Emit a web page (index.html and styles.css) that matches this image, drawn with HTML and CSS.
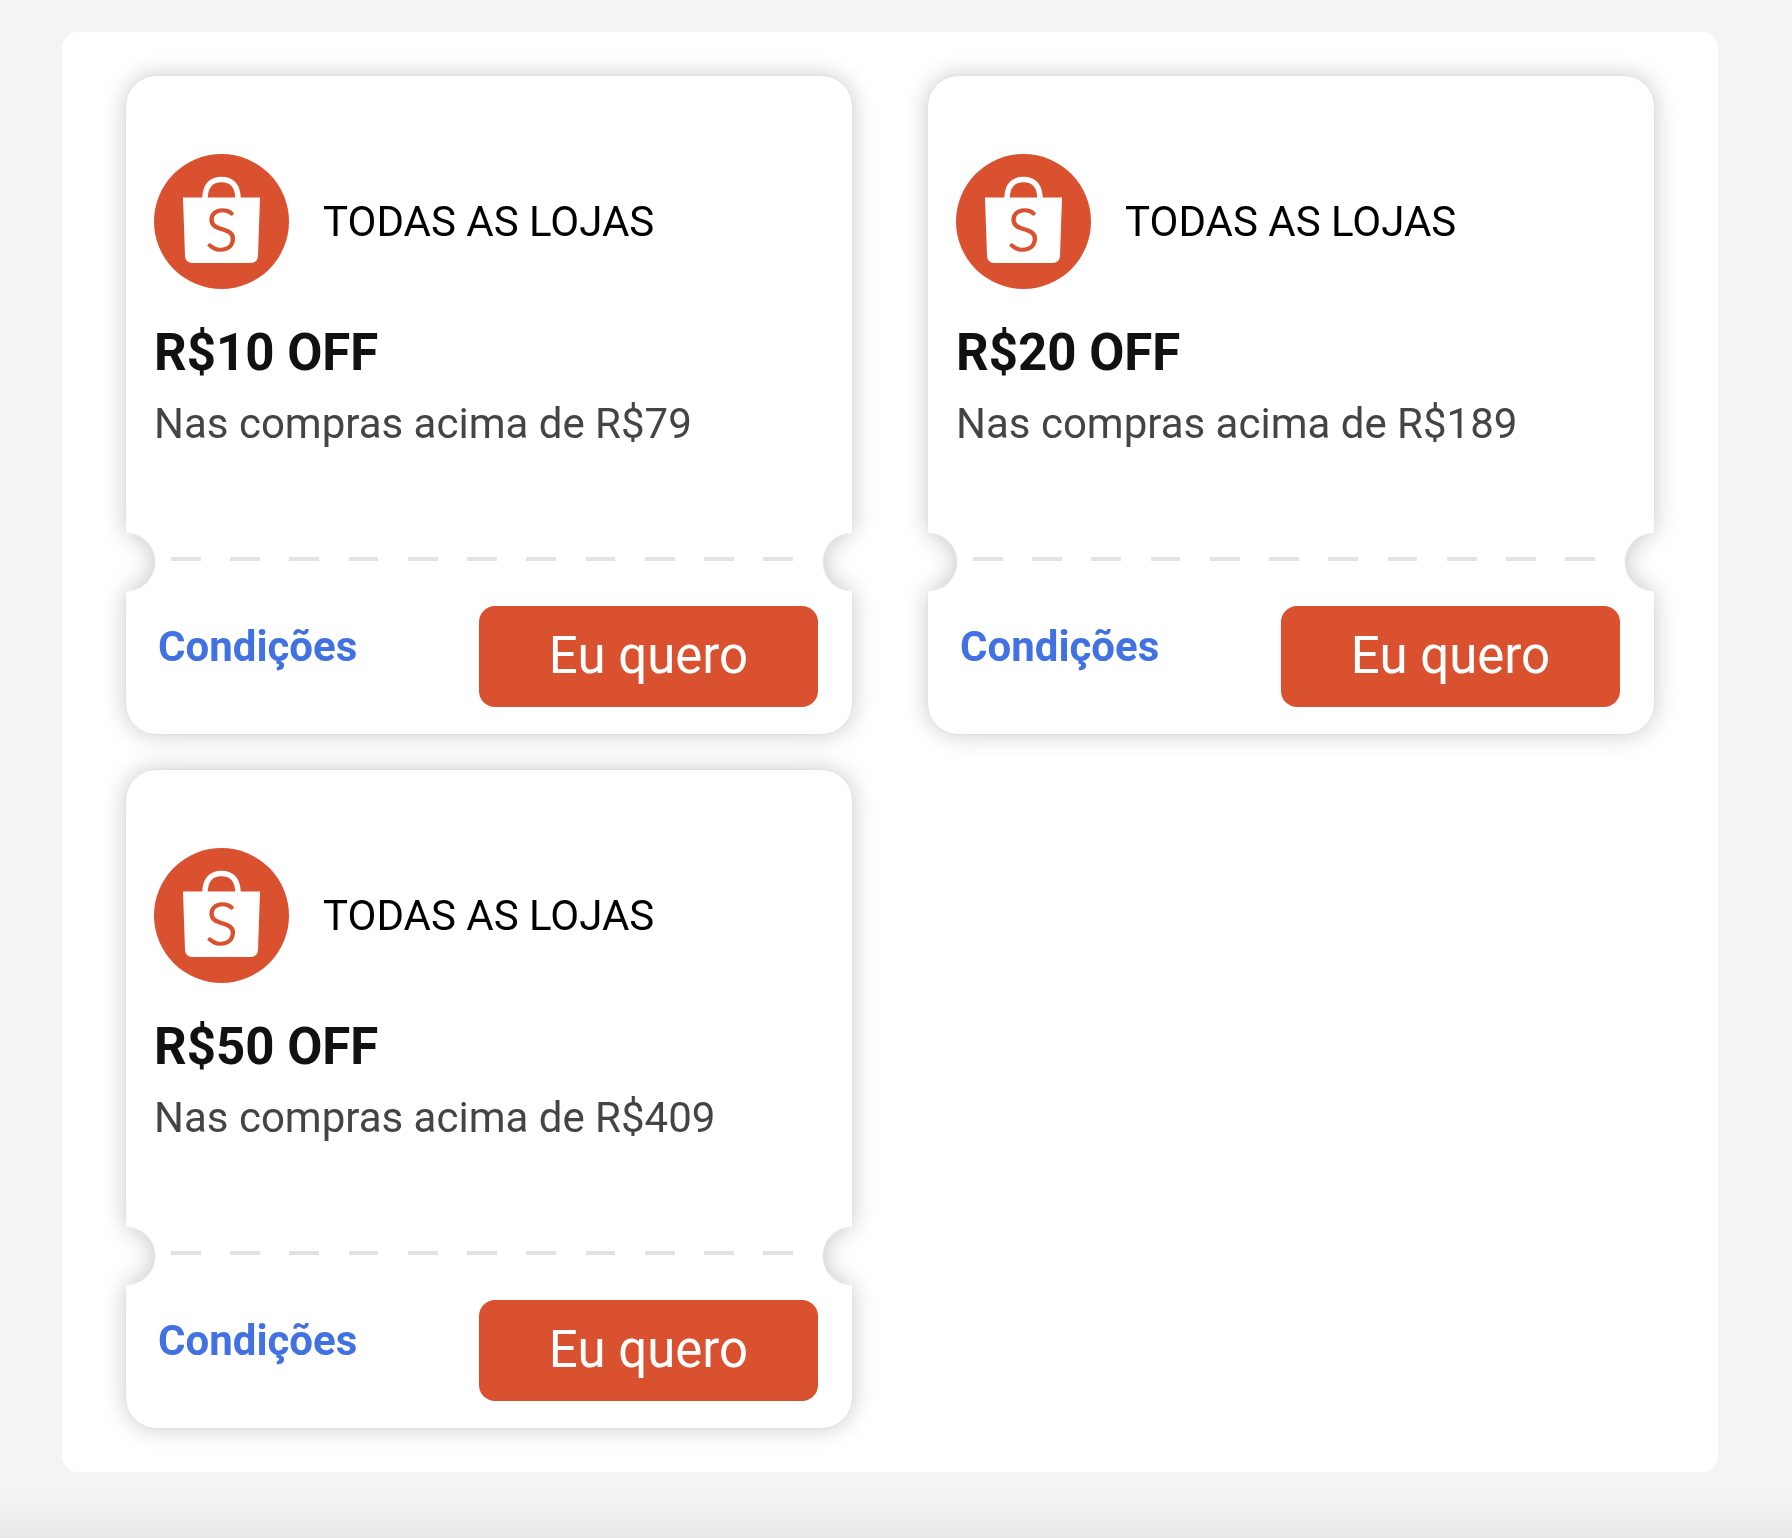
FILE: index.html
```html
<!DOCTYPE html>
<html lang="pt-BR">
<head>
    <meta charset="UTF-8">
    <meta name="viewport" content="width=device-width, initial-scale=1.0">
    <title>Cupons</title>
    <link rel="stylesheet" href="styles.css">
</head>
<body>
    <main class="panel">
        <div class="coupon">
            <div class="card">
                <div class="store">
                    <svg class="logo" viewBox="0 0 135 135" aria-hidden="true">
                        <circle cx="67.5" cy="67.5" r="67.5" fill="#da5130"/>
                        <path d="M51 45C51 32 57 25.5 67.5 25.5S84 32 84 45" fill="none" stroke="#fff" stroke-width="5.5"/>
                        <path d="M29 43.5H106L104 102Q103.500 109 96.500 109H38.500Q31.500 109 31 102Z" fill="#fff"/>
                        <text class="logo-letter" x="67.5" y="97" text-anchor="middle">S</text>
                    </svg>
                    <span class="store-name">TODAS AS LOJAS</span>
                </div>
                <h2 class="discount">R$10 OFF</h2>
                <p class="minimum">Nas compras acima de R$79</p>
                <div class="divider"></div>
                <div class="actions">
                    <a href="#" class="terms">Condições</a>
                    <button type="button" class="claim">Eu quero</button>
                </div>
            </div>
        </div>

        <div class="coupon">
            <div class="card">
                <div class="store">
                    <svg class="logo" viewBox="0 0 135 135" aria-hidden="true">
                        <circle cx="67.5" cy="67.5" r="67.5" fill="#da5130"/>
                        <path d="M51 45C51 32 57 25.5 67.5 25.5S84 32 84 45" fill="none" stroke="#fff" stroke-width="5.5"/>
                        <path d="M29 43.5H106L104 102Q103.500 109 96.500 109H38.500Q31.500 109 31 102Z" fill="#fff"/>
                        <text class="logo-letter" x="67.5" y="97" text-anchor="middle">S</text>
                    </svg>
                    <span class="store-name">TODAS AS LOJAS</span>
                </div>
                <h2 class="discount">R$20 OFF</h2>
                <p class="minimum">Nas compras acima de R$189</p>
                <div class="divider"></div>
                <div class="actions">
                    <a href="#" class="terms">Condições</a>
                    <button type="button" class="claim">Eu quero</button>
                </div>
            </div>
        </div>

        <div class="coupon">
            <div class="card">
                <div class="store">
                    <svg class="logo" viewBox="0 0 135 135" aria-hidden="true">
                        <circle cx="67.5" cy="67.5" r="67.5" fill="#da5130"/>
                        <path d="M51 45C51 32 57 25.5 67.5 25.5S84 32 84 45" fill="none" stroke="#fff" stroke-width="5.5"/>
                        <path d="M29 43.5H106L104 102Q103.500 109 96.500 109H38.500Q31.500 109 31 102Z" fill="#fff"/>
                        <text class="logo-letter" x="67.5" y="97" text-anchor="middle">S</text>
                    </svg>
                    <span class="store-name">TODAS AS LOJAS</span>
                </div>
                <h2 class="discount">R$50 OFF</h2>
                <p class="minimum">Nas compras acima de R$409</p>
                <div class="divider"></div>
                <div class="actions">
                    <a href="#" class="terms">Condições</a>
                    <button type="button" class="claim">Eu quero</button>
                </div>
            </div>
        </div>
    </main>
</body>
</html>
```

FILE: styles.css
```css
* {
    box-sizing: border-box;
}

body {
    font-family: Roboto, Arial, sans-serif;
    background: linear-gradient(#f4f4f4, #e9e9e9) bottom / 100% 48px no-repeat #f4f4f4;
    margin: 0;
    padding: 32px 74px 66px 62px;
}

.panel {
    display: grid;
    grid-template-columns: repeat(2, 1fr);
    gap: 36px 76px;
    padding: 44px 64px;
    background-color: #fff;
    border-radius: 16px;
}

/* the shadow sits on the wrapper so that it follows the notches */
.coupon {
    filter: drop-shadow(0 0 1px rgba(0, 0, 0, 0.06)) drop-shadow(0 0 12px rgba(0, 0, 0, 0.22));
}

.card {
    padding: 78px 0 27px;
    background-color: #fff;
    border-radius: 30px;
    -webkit-mask-image:
        radial-gradient(circle at 0 calc(100% - 172px), transparent 28px, #000 30px),
        radial-gradient(circle at 100% calc(100% - 172px), transparent 28px, #000 30px);
    -webkit-mask-composite: source-in;
    mask-image:
        radial-gradient(circle at 0 calc(100% - 172px), transparent 28px, #000 30px),
        radial-gradient(circle at 100% calc(100% - 172px), transparent 28px, #000 30px);
    mask-composite: intersect;
}

.store {
    display: flex;
    align-items: center;
    gap: 34px;
    padding: 0 28px;
}

.logo {
    width: 135px;
    height: 135px;
}

.logo-letter {
    font-family: Lato, sans-serif;
    font-size: 60px;
    font-weight: 300;
    fill: #da5130;
    stroke: #da5130;
    stroke-width: 1.5;
}

.store-name {
    font-size: 42px;
    line-height: 52px;
    color: #000;
}

.discount {
    margin: 34px 28px 0;
    font-size: 51px;
    font-weight: bold;
    line-height: 60px;
    color: #111;
}

.minimum {
    margin: 15px 28px 0;
    font-size: 42px;
    line-height: 52px;
    color: #444;
}

.divider {
    height: 4px;
    margin: 107px 59px 45px 45px;
    background: repeating-linear-gradient(to right, #e2e2e2 0 calc(100% / 21), transparent 0 calc(200% / 21));
}

.actions {
    display: flex;
    justify-content: space-between;
    align-items: flex-start;
    padding: 0 34px 0 32px;
}

.terms {
    padding: 15px 0;
    font-size: 42px;
    font-weight: bold;
    line-height: 52px;
    color: #4272e2;
    text-decoration: none;
}

.claim {
    width: 339px;
    padding: 20px 0 21px;
    border: none;
    border-radius: 16px;
    background-color: #da5130;
    color: #fff;
    font-family: inherit;
    font-size: 51px;
    line-height: 60px;
    cursor: pointer;
}
```
